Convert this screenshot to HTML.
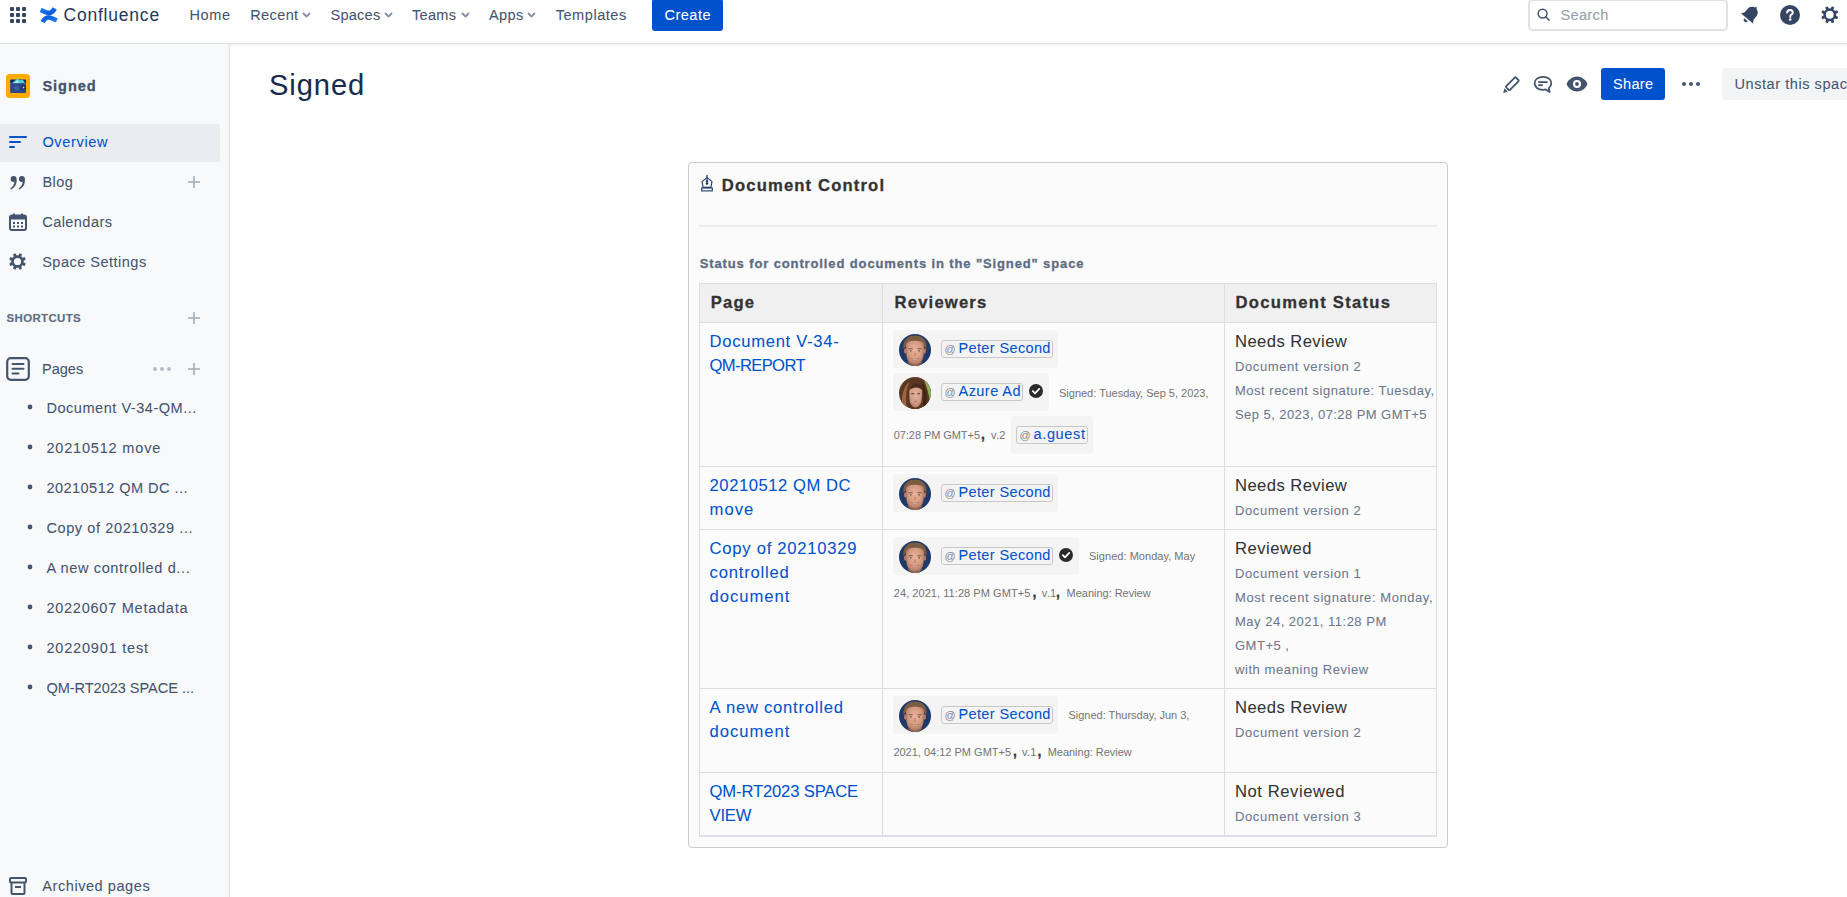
<!DOCTYPE html>
<html><head><meta charset="utf-8"><title>Signed - Confluence</title>
<style>
html,body{margin:0;padding:0;}
body{width:1847px;height:897px;overflow:hidden;position:relative;background:#fff;font-family:"Liberation Sans",sans-serif;}
.a{position:absolute;}
.t{position:absolute;white-space:nowrap;}
</style></head><body>
<div class="a" style="left:0px;top:0px;width:1847px;height:43px;background:#fff;"></div>
<div class="a" style="left:0px;top:43px;width:1847px;height:1px;background:#DCDFE4;"></div>
<div class="a" style="left:0px;top:44px;width:1847px;height:3px;background:linear-gradient(rgba(9,30,66,0.06),rgba(9,30,66,0));"></div>
<svg class="a" style="left:10px;top:7px;" width="16" height="16" viewBox="0 0 16 16" preserveAspectRatio="none"><rect x="0" y="0" width="4" height="4" rx="1" fill="#344563"/><rect x="0" y="6" width="4" height="4" rx="1" fill="#344563"/><rect x="0" y="12" width="4" height="4" rx="1" fill="#344563"/><rect x="6" y="0" width="4" height="4" rx="1" fill="#344563"/><rect x="6" y="6" width="4" height="4" rx="1" fill="#344563"/><rect x="6" y="12" width="4" height="4" rx="1" fill="#344563"/><rect x="12" y="0" width="4" height="4" rx="1" fill="#344563"/><rect x="12" y="6" width="4" height="4" rx="1" fill="#344563"/><rect x="12" y="12" width="4" height="4" rx="1" fill="#344563"/></svg>
<svg class="a" style="left:40.3px;top:6.9px;" width="17.4" height="16.4" viewBox="0 0 18 18" preserveAspectRatio="none"><defs><linearGradient id="cg1" x1="0" y1="0" x2="1" y2="1"><stop offset="0" stop-color="#0052CC"/><stop offset="1" stop-color="#2684FF"/></linearGradient><linearGradient id="cg2" x1="1" y1="1" x2="0" y2="0"><stop offset="0" stop-color="#0052CC"/><stop offset="1" stop-color="#2684FF"/></linearGradient></defs><path d="M1.6 13.6c-.25.4-.5.85-.7 1.15a.56.56 0 0 0 .19.77l3.3 2.03a.56.56 0 0 0 .78-.19c.17-.3.4-.68.66-1.1 1.78-2.92 3.56-2.56 6.79-1.02l3.27 1.56a.56.56 0 0 0 .75-.28l1.57-3.55a.56.56 0 0 0-.28-.73c-.7-.32-2.07-.97-3.3-1.56C10.17 8.43 5.25 7.6 1.6 13.6z" fill="url(#cg1)"/><path d="M16.4 4.4c.25-.4.5-.85.7-1.15a.56.56 0 0 0-.19-.77L13.6.45a.56.56 0 0 0-.78.19c-.17.3-.4.68-.66 1.1-1.78 2.92-3.56 2.56-6.79 1.02L2.1 1.2a.56.56 0 0 0-.75.28L-.22 5.03a.56.56 0 0 0 .28.73c.7.32 2.07.97 3.3 1.56 4.47 2.25 9.39 3.08 13.04-2.92z" fill="url(#cg2)"/></svg>
<div class="t " style="left:63.50px;top:5.00px;font-size:17.50px;line-height:20px;letter-spacing:0.0450em;color:#253858;">Confluence</div>
<div class="t " style="left:189.40px;top:5.00px;font-size:14.56px;line-height:20px;letter-spacing:0.0430em;color:#44546F;-webkit-text-stroke:0.06px #44546F;">Home</div>
<div class="t " style="left:250.20px;top:5.00px;font-size:14.56px;line-height:20px;letter-spacing:0.0259em;color:#44546F;-webkit-text-stroke:0.06px #44546F;">Recent</div>
<svg class="a" style="left:301.5px;top:11px;" width="9" height="8" viewBox="0 0 9 8" preserveAspectRatio="none"><path d="M1.5 2.5 L4.5 5.5 L7.5 2.5" stroke="#8590A2" stroke-width="1.8" fill="none" stroke-linecap="round" stroke-linejoin="round"/></svg>
<div class="t " style="left:330.50px;top:5.00px;font-size:14.56px;line-height:20px;letter-spacing:0.0161em;color:#44546F;-webkit-text-stroke:0.06px #44546F;">Spaces</div>
<svg class="a" style="left:383.5px;top:11px;" width="9" height="8" viewBox="0 0 9 8" preserveAspectRatio="none"><path d="M1.5 2.5 L4.5 5.5 L7.5 2.5" stroke="#8590A2" stroke-width="1.8" fill="none" stroke-linecap="round" stroke-linejoin="round"/></svg>
<div class="t " style="left:412.00px;top:5.00px;font-size:14.56px;line-height:20px;letter-spacing:0.0194em;color:#44546F;-webkit-text-stroke:0.06px #44546F;">Teams</div>
<svg class="a" style="left:460.5px;top:11px;" width="9" height="8" viewBox="0 0 9 8" preserveAspectRatio="none"><path d="M1.5 2.5 L4.5 5.5 L7.5 2.5" stroke="#8590A2" stroke-width="1.8" fill="none" stroke-linecap="round" stroke-linejoin="round"/></svg>
<div class="t " style="left:489.00px;top:5.00px;font-size:14.56px;line-height:20px;letter-spacing:0.0253em;color:#44546F;-webkit-text-stroke:0.06px #44546F;">Apps</div>
<svg class="a" style="left:526.5px;top:11px;" width="9" height="8" viewBox="0 0 9 8" preserveAspectRatio="none"><path d="M1.5 2.5 L4.5 5.5 L7.5 2.5" stroke="#8590A2" stroke-width="1.8" fill="none" stroke-linecap="round" stroke-linejoin="round"/></svg>
<div class="t " style="left:555.70px;top:5.00px;font-size:14.56px;line-height:20px;letter-spacing:0.0368em;color:#44546F;-webkit-text-stroke:0.06px #44546F;">Templates</div>
<div class="a" style="left:652px;top:-1px;width:71px;height:32px;background:#0052CC;border-radius:3px;"></div>
<div class="t " style="left:664.50px;top:5.00px;font-size:14.56px;line-height:20px;letter-spacing:0.0321em;color:#fff;-webkit-text-stroke:0.06px #fff;">Create</div>
<div class="a" style="left:1528px;top:-1px;width:200px;height:32px;box-sizing:border-box;border:2px solid #DFE1E6;border-radius:5px;background:#fff;"></div>
<svg class="a" style="left:1537px;top:8px;" width="14" height="14" viewBox="0 0 14 14" preserveAspectRatio="none"><circle cx="5.6" cy="5.6" r="4.4" stroke="#44546F" stroke-width="1.5" fill="none"/><path d="M8.8 8.8 L12.2 12.2" stroke="#44546F" stroke-width="1.5" stroke-linecap="round"/></svg>
<div class="t " style="left:1560.50px;top:5.00px;font-size:14.56px;line-height:20px;letter-spacing:0.0225em;color:#97A0AF;-webkit-text-stroke:0.10px #97A0AF;">Search</div>
<svg class="a" style="left:1739px;top:4px;" width="22" height="22" viewBox="0 0 22 22" preserveAspectRatio="none"><g transform="rotate(40 11 11)"><path d="M11 2.2c-3.6 0-5.8 2.7-5.8 6v4.2L3.2 15.6h15.6l-2-3.2V8.2c0-3.3-2.2-6-5.8-6z" fill="#344563"/><path d="M8.6 17.2h4.8a2.4 2.4 0 0 1-4.8 0z" fill="#344563"/><rect x="10" y="0.8" width="2" height="2.4" rx="1" fill="#344563"/></g></svg>
<svg class="a" style="left:1780px;top:5px;" width="20" height="20" viewBox="0 0 20 20" preserveAspectRatio="none"><circle cx="10" cy="10" r="10" fill="#344563"/><path d="M7.2 7.6c0-1.6 1.2-2.7 2.8-2.7s2.8 1.1 2.8 2.5c0 1.2-.7 1.8-1.5 2.3-.7.4-1 .8-1 1.6v.6" stroke="#fff" stroke-width="2" fill="none" stroke-linecap="round"/><circle cx="10.2" cy="14.6" r="1.25" fill="#fff"/></svg>
<svg class="a" style="left:1820px;top:5px;" width="19.5" height="19.5" viewBox="0 0 20 20" preserveAspectRatio="none"><circle cx="10" cy="10" r="5.3" stroke="#344563" stroke-width="2.6" fill="none"/><rect x="8.5" y="1.2000000000000004" width="3.0" height="3.0" rx="0.8" fill="#344563" transform="rotate(22.5 10 10)"/><rect x="8.5" y="1.2000000000000004" width="3.0" height="3.0" rx="0.8" fill="#344563" transform="rotate(67.5 10 10)"/><rect x="8.5" y="1.2000000000000004" width="3.0" height="3.0" rx="0.8" fill="#344563" transform="rotate(112.5 10 10)"/><rect x="8.5" y="1.2000000000000004" width="3.0" height="3.0" rx="0.8" fill="#344563" transform="rotate(157.5 10 10)"/><rect x="8.5" y="1.2000000000000004" width="3.0" height="3.0" rx="0.8" fill="#344563" transform="rotate(202.5 10 10)"/><rect x="8.5" y="1.2000000000000004" width="3.0" height="3.0" rx="0.8" fill="#344563" transform="rotate(247.5 10 10)"/><rect x="8.5" y="1.2000000000000004" width="3.0" height="3.0" rx="0.8" fill="#344563" transform="rotate(292.5 10 10)"/><rect x="8.5" y="1.2000000000000004" width="3.0" height="3.0" rx="0.8" fill="#344563" transform="rotate(337.5 10 10)"/></svg>
<div class="a" style="left:0px;top:44px;width:229px;height:853px;background:#F8F9FA;"></div>
<div class="a" style="left:229px;top:44px;width:1px;height:853px;background:#E4E6EA;"></div>
<div class="a" style="left:227px;top:44px;width:2px;height:853px;background:linear-gradient(90deg,rgba(9,30,66,0),rgba(9,30,66,0.03));"></div>
<svg class="a" style="left:6px;top:74px;" width="24" height="24" viewBox="0 0 24 24" preserveAspectRatio="none"><rect width="24" height="24" rx="3.5" fill="#FFAB00"/><rect x="4.2" y="5.5" width="15.8" height="4" rx="1" fill="#0B2A5E"/><path d="M5.5 9.6 L11.5 4.5 L14 6.2 L16.5 5.6 L19.5 9.6 Z" fill="#4FD1D9"/><path d="M7 9.6 L11.5 6 L13.5 9.6Z" fill="#A6EEF0"/><rect x="4.2" y="9.3" width="15.8" height="9.7" rx="0.8" fill="#284A8C"/><circle cx="10.5" cy="14" r="2.6" fill="#3A6298"/><circle cx="17.5" cy="13.5" r="2.3" fill="#0B2A5E"/><circle cx="17.5" cy="13.5" r="1" fill="#FFD23F"/></svg>
<div class="t " style="left:42.40px;top:76.00px;font-size:14.56px;line-height:20px;letter-spacing:0.0669em;color:#44546F;font-weight:bold;-webkit-text-stroke:0.30px #44546F;">Signed</div>
<div class="a" style="left:0px;top:124px;width:220px;height:38px;background:#EBECF0;border-radius:0 3px 3px 0;"></div>
<svg class="a" style="left:9px;top:136px;" width="18" height="12" viewBox="0 0 18 12" preserveAspectRatio="none"><rect x="0" y="0" width="18" height="2" rx="1" fill="#0052CC"/><rect x="0" y="5" width="12" height="2" rx="1" fill="#0052CC"/><rect x="0" y="10" width="6" height="2" rx="1" fill="#0052CC"/></svg>
<div class="t " style="left:42.40px;top:132.00px;font-size:14.56px;line-height:20px;letter-spacing:0.0448em;color:#0052CC;-webkit-text-stroke:0.06px #0052CC;">Overview</div>
<svg class="a" style="left:10px;top:175px;" width="17" height="15" viewBox="0 0 17 15" preserveAspectRatio="none"><circle cx="3.5999999999999996" cy="4.1" r="3.0" fill="#44546F"/><path d="M6.6 4.2 C6.8999999999999995 9.5 4.5 13.2 0.7 14.4 L0.5 13.2 C2.9 12 4.2 9.6 4.3999999999999995 6.8 Z" fill="#44546F"/><circle cx="11.899999999999999" cy="4.1" r="3.0" fill="#44546F"/><path d="M14.899999999999999 4.2 C15.2 9.5 12.8 13.2 9.0 14.4 L8.799999999999999 13.2 C11.2 12 12.5 9.6 12.7 6.8 Z" fill="#44546F"/></svg>
<div class="t " style="left:42.40px;top:172.00px;font-size:14.56px;line-height:20px;letter-spacing:0.0311em;color:#44546F;-webkit-text-stroke:0.06px #44546F;">Blog</div>
<svg class="a" style="left:188px;top:176px;" width="12" height="12" viewBox="0 0 12 12" preserveAspectRatio="none"><rect x="5.2" y="0" width="1.6" height="12" fill="#A5ADBA"/><rect x="0" y="5.2" width="12" height="1.6" fill="#A5ADBA"/></svg>
<svg class="a" style="left:9px;top:213px;" width="18" height="18" viewBox="0 0 18 18" preserveAspectRatio="none"><rect x="1" y="2.5" width="16" height="14.5" rx="2" stroke="#44546F" stroke-width="2" fill="none"/><rect x="1" y="2.5" width="16" height="4" fill="#44546F"/><rect x="4" y="0.5" width="2" height="3" fill="#44546F"/><rect x="12" y="0.5" width="2" height="3" fill="#44546F"/><rect x="4" y="9.0" width="2" height="2" fill="#44546F"/><rect x="4" y="12.5" width="2" height="2" fill="#44546F"/><rect x="8" y="9.0" width="2" height="2" fill="#44546F"/><rect x="8" y="12.5" width="2" height="2" fill="#44546F"/><rect x="12" y="9.0" width="2" height="2" fill="#44546F"/><rect x="12" y="12.5" width="2" height="2" fill="#44546F"/></svg>
<div class="t " style="left:42.20px;top:212.00px;font-size:14.56px;line-height:20px;letter-spacing:0.0297em;color:#44546F;-webkit-text-stroke:0.06px #44546F;">Calendars</div>
<svg class="a" style="left:8px;top:252px;" width="19" height="19" viewBox="0 0 20 20" preserveAspectRatio="none"><circle cx="10" cy="10" r="5.199999999999999" stroke="#44546F" stroke-width="2.8" fill="none"/><rect x="8.4" y="1.2000000000000004" width="3.2" height="3.0" rx="0.8" fill="#44546F" transform="rotate(22.5 10 10)"/><rect x="8.4" y="1.2000000000000004" width="3.2" height="3.0" rx="0.8" fill="#44546F" transform="rotate(67.5 10 10)"/><rect x="8.4" y="1.2000000000000004" width="3.2" height="3.0" rx="0.8" fill="#44546F" transform="rotate(112.5 10 10)"/><rect x="8.4" y="1.2000000000000004" width="3.2" height="3.0" rx="0.8" fill="#44546F" transform="rotate(157.5 10 10)"/><rect x="8.4" y="1.2000000000000004" width="3.2" height="3.0" rx="0.8" fill="#44546F" transform="rotate(202.5 10 10)"/><rect x="8.4" y="1.2000000000000004" width="3.2" height="3.0" rx="0.8" fill="#44546F" transform="rotate(247.5 10 10)"/><rect x="8.4" y="1.2000000000000004" width="3.2" height="3.0" rx="0.8" fill="#44546F" transform="rotate(292.5 10 10)"/><rect x="8.4" y="1.2000000000000004" width="3.2" height="3.0" rx="0.8" fill="#44546F" transform="rotate(337.5 10 10)"/></svg>
<div class="t " style="left:42.20px;top:252.00px;font-size:14.56px;line-height:20px;letter-spacing:0.0324em;color:#44546F;-webkit-text-stroke:0.06px #44546F;">Space Settings</div>
<div class="t " style="left:6.60px;top:308.00px;font-size:11.44px;line-height:20px;letter-spacing:0.0310em;color:#5E6C84;font-weight:bold;-webkit-text-stroke:0.15px #5E6C84;">SHORTCUTS</div>
<svg class="a" style="left:188px;top:312px;" width="12" height="12" viewBox="0 0 12 12" preserveAspectRatio="none"><rect x="5.2" y="0" width="1.6" height="12" fill="#A5ADBA"/><rect x="0" y="5.2" width="12" height="1.6" fill="#A5ADBA"/></svg>
<svg class="a" style="left:6px;top:357px;" width="24" height="24" viewBox="0 0 24 24" preserveAspectRatio="none"><rect x="1.2" y="1.2" width="21.6" height="21.6" rx="3.5" stroke="#44546F" stroke-width="2.2" fill="none"/><rect x="5.5" y="6" width="13" height="2" rx="1" fill="#44546F"/><rect x="5.5" y="10.8" width="13" height="2" rx="1" fill="#44546F"/><rect x="5.5" y="15.6" width="8" height="2" rx="1" fill="#44546F"/></svg>
<div class="t " style="left:42.00px;top:359.00px;font-size:14.56px;line-height:20px;letter-spacing:-0.0013em;color:#44546F;-webkit-text-stroke:0.06px #44546F;">Pages</div>
<svg class="a" style="left:152px;top:366px;" width="20" height="6" viewBox="0 0 20 6" preserveAspectRatio="none"><circle cx="3" cy="3" r="1.9" fill="#B3B9C4"/><circle cx="10" cy="3" r="1.9" fill="#B3B9C4"/><circle cx="17" cy="3" r="1.9" fill="#B3B9C4"/></svg>
<svg class="a" style="left:188px;top:363px;" width="12" height="12" viewBox="0 0 12 12" preserveAspectRatio="none"><rect x="5.2" y="0" width="1.6" height="12" fill="#A5ADBA"/><rect x="0" y="5.2" width="12" height="1.6" fill="#A5ADBA"/></svg>
<svg class="a" style="left:27px;top:403.5px;" width="6" height="6" viewBox="0 0 6 6" preserveAspectRatio="none"><circle cx="3" cy="3" r="2.4" fill="#44546F"/></svg>
<div class="t " style="left:46.40px;top:398.00px;font-size:14.56px;line-height:20px;letter-spacing:0.0356em;color:#44546F;-webkit-text-stroke:0.06px #44546F;">Document V-34-QM...</div>
<svg class="a" style="left:27px;top:443.5px;" width="6" height="6" viewBox="0 0 6 6" preserveAspectRatio="none"><circle cx="3" cy="3" r="2.4" fill="#44546F"/></svg>
<div class="t " style="left:46.40px;top:438.00px;font-size:14.56px;line-height:20px;letter-spacing:0.0548em;color:#44546F;-webkit-text-stroke:0.06px #44546F;">20210512 move</div>
<svg class="a" style="left:27px;top:483.5px;" width="6" height="6" viewBox="0 0 6 6" preserveAspectRatio="none"><circle cx="3" cy="3" r="2.4" fill="#44546F"/></svg>
<div class="t " style="left:46.40px;top:478.00px;font-size:14.56px;line-height:20px;letter-spacing:0.0309em;color:#44546F;-webkit-text-stroke:0.06px #44546F;">20210512 QM DC ...</div>
<svg class="a" style="left:27px;top:523.5px;" width="6" height="6" viewBox="0 0 6 6" preserveAspectRatio="none"><circle cx="3" cy="3" r="2.4" fill="#44546F"/></svg>
<div class="t " style="left:46.40px;top:518.00px;font-size:14.56px;line-height:20px;letter-spacing:0.0405em;color:#44546F;-webkit-text-stroke:0.06px #44546F;">Copy of 20210329 ...</div>
<svg class="a" style="left:27px;top:563.5px;" width="6" height="6" viewBox="0 0 6 6" preserveAspectRatio="none"><circle cx="3" cy="3" r="2.4" fill="#44546F"/></svg>
<div class="t " style="left:46.40px;top:558.00px;font-size:14.56px;line-height:20px;letter-spacing:0.0423em;color:#44546F;-webkit-text-stroke:0.06px #44546F;">A new controlled d...</div>
<svg class="a" style="left:27px;top:603.5px;" width="6" height="6" viewBox="0 0 6 6" preserveAspectRatio="none"><circle cx="3" cy="3" r="2.4" fill="#44546F"/></svg>
<div class="t " style="left:46.40px;top:598.00px;font-size:14.56px;line-height:20px;letter-spacing:0.0504em;color:#44546F;-webkit-text-stroke:0.06px #44546F;">20220607 Metadata</div>
<svg class="a" style="left:27px;top:643.5px;" width="6" height="6" viewBox="0 0 6 6" preserveAspectRatio="none"><circle cx="3" cy="3" r="2.4" fill="#44546F"/></svg>
<div class="t " style="left:46.40px;top:638.00px;font-size:14.56px;line-height:20px;letter-spacing:0.0544em;color:#44546F;-webkit-text-stroke:0.06px #44546F;">20220901 test</div>
<svg class="a" style="left:27px;top:683.5px;" width="6" height="6" viewBox="0 0 6 6" preserveAspectRatio="none"><circle cx="3" cy="3" r="2.4" fill="#44546F"/></svg>
<div class="t " style="left:46.40px;top:678.00px;font-size:14.56px;line-height:20px;letter-spacing:-0.0024em;color:#44546F;-webkit-text-stroke:0.06px #44546F;">QM-RT2023 SPACE ...</div>
<svg class="a" style="left:9px;top:877px;" width="18" height="18" viewBox="0 0 18 18" preserveAspectRatio="none"><rect x="1" y="1" width="16" height="4.5" rx="1" stroke="#44546F" stroke-width="2" fill="none"/><path d="M2.5 5.5 V16 a1 1 0 0 0 1 1 h11 a1 1 0 0 0 1 -1 V5.5" stroke="#44546F" stroke-width="2" fill="none"/><rect x="6" y="9" width="6" height="2" fill="#44546F"/></svg>
<div class="t " style="left:42.30px;top:876.00px;font-size:14.56px;line-height:20px;letter-spacing:0.0374em;color:#44546F;-webkit-text-stroke:0.06px #44546F;">Archived pages</div>
<div class="t " style="left:269.00px;top:75.00px;font-size:29.12px;line-height:20px;letter-spacing:0.0311em;color:#172B4D;-webkit-text-stroke:0.06px #172B4D;">Signed</div>
<svg class="a" style="left:1502px;top:75px;" width="19" height="19" viewBox="0 0 19 19" preserveAspectRatio="none"><g transform="rotate(-45 10.6 8.4)"><rect x="3.3" y="5.8" width="13.8" height="5.2" rx="0.9" stroke="#44546F" stroke-width="1.8" fill="none"/></g><path d="M1.2 17.9 L2.4 13.3 L5.8 16.7 Z" fill="#44546F"/></svg>
<svg class="a" style="left:1533px;top:75px;" width="20" height="19" viewBox="0 0 20 19" preserveAspectRatio="none"><path d="M10 1.8 C5 1.8 1.6 4.6 1.6 8.3 C1.6 12 5 14.8 10 14.8 C11 14.8 11.9 14.7 12.7 14.4 L16.6 17 L15.7 13.3 C17.3 12.1 18.3 10.3 18.3 8.3 C18.3 4.6 15 1.8 10 1.8 Z" stroke="#44546F" stroke-width="1.8" fill="none" stroke-linejoin="round"/><rect x="5.2" y="6.2" width="9.4" height="1.8" fill="#44546F"/><rect x="5.2" y="9.3" width="4.6" height="1.8" fill="#44546F"/></svg>
<svg class="a" style="left:1566px;top:75px;" width="22" height="18" viewBox="0 0 22 18" preserveAspectRatio="none"><path d="M11 1.5 C5.5 1.5 1.5 6 0.6 9 C1.5 12 5.5 16.5 11 16.5 C16.5 16.5 20.5 12 21.4 9 C20.5 6 16.5 1.5 11 1.5 Z" fill="#44546F"/><circle cx="11" cy="9" r="4" fill="#fff"/><circle cx="11" cy="9" r="1.9" fill="#44546F"/></svg>
<div class="a" style="left:1601px;top:68px;width:64px;height:32px;background:#0052CC;border-radius:3px;"></div>
<div class="t " style="left:1613.00px;top:74.00px;font-size:14.56px;line-height:20px;letter-spacing:0.0212em;color:#fff;-webkit-text-stroke:0.06px #fff;">Share</div>
<svg class="a" style="left:1681px;top:81px;" width="20" height="6" viewBox="0 0 20 6" preserveAspectRatio="none"><circle cx="3" cy="3" r="2" fill="#44546F"/><circle cx="10" cy="3" r="2" fill="#44546F"/><circle cx="17" cy="3" r="2" fill="#44546F"/></svg>
<div class="a" style="left:1722px;top:68px;width:140px;height:32px;background:#F3F4F6;border-radius:3px;"></div>
<div class="t " style="left:1734.50px;top:74.00px;font-size:14.56px;line-height:20px;letter-spacing:0.0375em;color:#44546F;-webkit-text-stroke:0.06px #44546F;">Unstar this space</div>
<div class="a" style="left:688px;top:162px;width:760px;height:686px;box-sizing:border-box;border:1px solid #CCCCCC;border-radius:4px;background:#FBFBFB;"></div>
<svg class="a" style="left:700px;top:174px;" width="14" height="18" viewBox="0 0 14 18" preserveAspectRatio="none"><path d="M7 1 V4.2" stroke="#17386E" stroke-width="1.3"/><path d="M7 3.6 L12 7.6 L10.9 13.4 H3.1 L2 7.6 Z" stroke="#17386E" stroke-width="1.1" fill="none" stroke-linejoin="round"/><path d="M7 3.8 L5.9 7.2 L7 9.6 L8.1 7.2 Z" fill="#17386E"/><circle cx="7" cy="9.4" r="1.25" fill="#17386E"/><rect x="1.7" y="14" width="10.6" height="2.9" stroke="#17386E" stroke-width="1.1" fill="none"/></svg>
<div class="t " style="left:721.80px;top:176.00px;font-size:16.64px;line-height:20px;letter-spacing:0.0690em;color:#333333;font-weight:bold;-webkit-text-stroke:0.30px #333333;">Document Control</div>
<div class="a" style="left:699px;top:225px;width:738px;height:2px;background:#EBECF0;"></div>
<div class="t " style="left:699.70px;top:254.00px;font-size:13.00px;line-height:20px;letter-spacing:0.0676em;color:#5E6C84;font-weight:bold;-webkit-text-stroke:0.30px #5E6C84;">Status for controlled documents in the "Signed" space</div>
<div class="a" style="left:699px;top:283px;width:738px;height:39px;background:#F0F0F0;"></div>
<div class="a" style="left:699px;top:283px;width:738px;height:1px;background:#DDDDDD;"></div>
<div class="a" style="left:699px;top:322px;width:738px;height:1px;background:#DDDDDD;"></div>
<div class="a" style="left:699px;top:466px;width:738px;height:1px;background:#DDDDDD;"></div>
<div class="a" style="left:699px;top:529px;width:738px;height:1px;background:#DDDDDD;"></div>
<div class="a" style="left:699px;top:688px;width:738px;height:1px;background:#DDDDDD;"></div>
<div class="a" style="left:699px;top:772px;width:738px;height:1px;background:#DDDDDD;"></div>
<div class="a" style="left:699px;top:835px;width:738px;height:2px;background:#DFE1E6;"></div>
<div class="a" style="left:699px;top:283px;width:1px;height:552px;background:#DDDDDD;"></div>
<div class="a" style="left:882px;top:283px;width:1px;height:552px;background:#DDDDDD;"></div>
<div class="a" style="left:1224px;top:283px;width:1px;height:552px;background:#DDDDDD;"></div>
<div class="a" style="left:1436px;top:283px;width:1px;height:552px;background:#DDDDDD;"></div>
<div class="t " style="left:710.80px;top:293.00px;font-size:16.64px;line-height:20px;letter-spacing:0.0699em;color:#333333;font-weight:bold;-webkit-text-stroke:0.30px #333333;">Page</div>
<div class="t " style="left:894.50px;top:293.00px;font-size:16.64px;line-height:20px;letter-spacing:0.0715em;color:#333333;font-weight:bold;-webkit-text-stroke:0.30px #333333;">Reviewers</div>
<div class="t " style="left:1235.50px;top:293.00px;font-size:16.64px;line-height:20px;letter-spacing:0.0763em;color:#333333;font-weight:bold;-webkit-text-stroke:0.30px #333333;">Document Status</div>
<div class="t " style="left:709.60px;top:332.00px;font-size:16.64px;line-height:20px;letter-spacing:0.0418em;color:#0052CC;-webkit-text-stroke:0.06px #0052CC;">Document V-34-</div>
<div class="t " style="left:709.60px;top:356.00px;font-size:16.64px;line-height:20px;letter-spacing:-0.0398em;color:#0052CC;-webkit-text-stroke:0.06px #0052CC;">QM-REPORT</div>
<div class="a" style="left:893px;top:330px;width:165px;height:38px;background:#F4F4F4;border-radius:4px;"></div>
<svg class="a" style="left:899px;top:333.5px;" width="32" height="32" viewBox="0 0 32 32" preserveAspectRatio="none"><defs><clipPath id="av1"><circle cx="16" cy="16" r="16"/></clipPath><radialGradient id="av1f" cx="0.5" cy="0.38" r="0.62"><stop offset="0" stop-color="#EDB59C"/><stop offset="0.6" stop-color="#D39A80"/><stop offset="1" stop-color="#A56E58"/></radialGradient></defs><g clip-path="url(#av1)"><rect width="32" height="32" fill="#1F3A68"/><path d="M4.5 15 C3.5 6 9 1.5 16 1.5 C23.5 1.5 28.5 6 27.5 15 L25.5 13 C24.5 9 20.5 7.5 16 7.8 C11.5 7.5 7.5 9 6.5 13 Z" fill="#7A5C42"/><path d="M7 11.5 C7 8 10.5 6.8 16 6.8 C21.5 6.8 25 8 25 11.5 L24.6 21 C23.6 28.5 20 32 16 32 C12 32 8.4 28.5 7.4 21 Z" fill="url(#av1f)"/><ellipse cx="6.6" cy="17" rx="1.7" ry="2.8" fill="#B57A62"/><ellipse cx="25.4" cy="17" rx="1.7" ry="2.8" fill="#B57A62"/><path d="M9.5 14.8 h4.2" stroke="#7A5A4A" stroke-width="1.1"/><path d="M18.3 14.8 h4.2" stroke="#7A5A4A" stroke-width="1.1"/><circle cx="11.8" cy="16.8" r="0.9" fill="#5A6A78"/><circle cx="20.2" cy="16.8" r="0.9" fill="#5A6A78"/><path d="M16 17 L14.8 21.5 H17.2 Z" fill="#C08068"/><path d="M11.8 24 C13.5 26.6 18.5 26.6 20.2 24 C18.5 25 13.5 25 11.8 24Z" fill="#F4E6DC" stroke="#9A5E4E" stroke-width="0.5"/><path d="M9 26 C11 31 21 31 23 26 L23 32 H9Z" fill="#8E6250" opacity="0.55"/></g></svg>
<div class="a" style="left:941px;top:340px;width:112px;height:18px;box-sizing:border-box;border:1px solid #C8C8C8;border-radius:3px;background:#F4F4F4;"></div>
<div class="t " style="left:944.50px;top:339.00px;font-size:11.00px;line-height:20px;letter-spacing:0.0000em;color:#8C8C8C;-webkit-text-stroke:0.06px #8C8C8C;">@</div>
<div class="t " style="left:958.50px;top:338.00px;font-size:14.56px;line-height:20px;letter-spacing:0.0238em;color:#0052CC;-webkit-text-stroke:0.06px #0052CC;">Peter Second</div>
<div class="a" style="left:893px;top:373px;width:156px;height:38px;background:#F4F4F4;border-radius:4px;"></div>
<svg class="a" style="left:899px;top:376.5px;" width="32" height="32" viewBox="0 0 32 32" preserveAspectRatio="none"><defs><clipPath id="av2"><circle cx="16" cy="16" r="16"/></clipPath><radialGradient id="av2f" cx="0.5" cy="0.42" r="0.6"><stop offset="0" stop-color="#E2B3A0"/><stop offset="0.7" stop-color="#CF9C86"/><stop offset="1" stop-color="#A87560"/></radialGradient></defs><g clip-path="url(#av2)"><rect width="32" height="32" fill="#5E3A24"/><path d="M24 0 H32 V26 C30 22 29 12 24 0Z" fill="#8DAE5E"/><path d="M2 32 C0 20 1.5 4 14 2 C26 1 31 12 29.5 32 Z" fill="#5A3621"/><path d="M3 30 C2 20 4 9 11 4.5 C7 11 6.5 22 8 31Z" fill="#9A6440"/><path d="M22 5 C27 9 28 18 27 30 L24 30 C25 20 25 11 22 5Z" fill="#3E2414"/><path d="M10.2 13 C10.5 8.8 13 7.5 16.5 7.5 C20.5 7.5 23.2 9 23.2 13.5 L22.8 22 C22.3 27.5 19.5 30.5 16.5 30.5 C13.5 30.5 10.8 27.5 10.4 22 Z" fill="url(#av2f)"/><path d="M9.8 13.5 C11 8 14 6.8 17 6.8 C21 6.8 23.8 9 23.6 14 C21.5 10 15 9.2 9.8 13.5Z" fill="#4A2C1A"/><path d="M12.3 16.6 h3" stroke="#6E5048" stroke-width="1.1"/><path d="M18.2 16.6 h3" stroke="#6E5048" stroke-width="1.1"/><path d="M14.6 24.3 C15.8 23.6 17.4 23.6 18.6 24.3 C17.4 25.2 15.8 25.2 14.6 24.3Z" fill="#B06A6E"/></g></svg>
<div class="a" style="left:941px;top:383px;width:82px;height:18px;box-sizing:border-box;border:1px solid #C8C8C8;border-radius:3px;background:#F4F4F4;"></div>
<div class="t " style="left:944.50px;top:382.00px;font-size:11.00px;line-height:20px;letter-spacing:0.0000em;color:#8C8C8C;-webkit-text-stroke:0.06px #8C8C8C;">@</div>
<div class="t " style="left:958.50px;top:381.00px;font-size:14.56px;line-height:20px;letter-spacing:0.0295em;color:#0052CC;-webkit-text-stroke:0.06px #0052CC;">Azure Ad</div>
<svg class="a" style="left:1029px;top:384px;" width="14" height="14" viewBox="0 0 14 14" preserveAspectRatio="none"><circle cx="7" cy="7" r="7" fill="#2B2B2B"/><path d="M3.8 7.2 L6 9.3 L10.2 4.9" stroke="#fff" stroke-width="1.8" fill="none" stroke-linecap="round" stroke-linejoin="round"/></svg>
<div class="t " style="left:1059.00px;top:383.00px;font-size:11.00px;line-height:20px;letter-spacing:-0.0003em;color:#737373;">Signed: Tuesday, Sep 5, 2023,</div>
<div class="t " style="left:893.75px;top:425.00px;font-size:11.00px;line-height:20px;letter-spacing:-0.0061em;color:#737373;">07:28 PM GMT+5</div>
<div class="t " style="left:981.00px;top:424.00px;font-size:14.00px;line-height:20px;letter-spacing:0.0000em;color:#333333;font-weight:bold;-webkit-text-stroke:0.30px #333333;">,</div>
<div class="t " style="left:991.00px;top:425.00px;font-size:11.00px;line-height:20px;letter-spacing:0.0176em;color:#737373;">v.2</div>
<div class="a" style="left:1011px;top:416px;width:82px;height:38px;background:#F4F4F4;border-radius:4px;"></div>
<div class="a" style="left:1016px;top:426px;width:72px;height:18px;box-sizing:border-box;border:1px solid #C8C8C8;border-radius:3px;background:#F4F4F4;"></div>
<div class="t " style="left:1019.50px;top:425.00px;font-size:11.00px;line-height:20px;letter-spacing:0.0000em;color:#8C8C8C;-webkit-text-stroke:0.06px #8C8C8C;">@</div>
<div class="t " style="left:1033.50px;top:424.00px;font-size:14.56px;line-height:20px;letter-spacing:0.0435em;color:#0052CC;-webkit-text-stroke:0.06px #0052CC;">a.guest</div>
<div class="t " style="left:1235.00px;top:332.00px;font-size:16.64px;line-height:20px;letter-spacing:0.0254em;color:#333333;-webkit-text-stroke:0.06px #333333;">Needs Review</div>
<div class="t " style="left:1235.00px;top:357.00px;font-size:13.00px;line-height:20px;letter-spacing:0.0462em;color:#6B778C;-webkit-text-stroke:0.06px #6B778C;">Document version 2</div>
<div class="t " style="left:1235.00px;top:381.00px;font-size:13.00px;line-height:20px;letter-spacing:0.0387em;color:#6B778C;-webkit-text-stroke:0.06px #6B778C;">Most recent signature: Tuesday,</div>
<div class="t " style="left:1235.00px;top:405.00px;font-size:13.00px;line-height:20px;letter-spacing:0.0333em;color:#6B778C;-webkit-text-stroke:0.06px #6B778C;">Sep 5, 2023, 07:28 PM GMT+5</div>
<div class="t " style="left:709.60px;top:476.00px;font-size:16.64px;line-height:20px;letter-spacing:0.0321em;color:#0052CC;-webkit-text-stroke:0.06px #0052CC;">20210512 QM DC</div>
<div class="t " style="left:709.60px;top:500.00px;font-size:16.64px;line-height:20px;letter-spacing:0.0603em;color:#0052CC;-webkit-text-stroke:0.06px #0052CC;">move</div>
<div class="a" style="left:893px;top:474px;width:165px;height:38px;background:#F4F4F4;border-radius:4px;"></div>
<svg class="a" style="left:899px;top:477.5px;" width="32" height="32" viewBox="0 0 32 32" preserveAspectRatio="none"><defs><clipPath id="av3"><circle cx="16" cy="16" r="16"/></clipPath><radialGradient id="av3f" cx="0.5" cy="0.38" r="0.62"><stop offset="0" stop-color="#EDB59C"/><stop offset="0.6" stop-color="#D39A80"/><stop offset="1" stop-color="#A56E58"/></radialGradient></defs><g clip-path="url(#av3)"><rect width="32" height="32" fill="#1F3A68"/><path d="M4.5 15 C3.5 6 9 1.5 16 1.5 C23.5 1.5 28.5 6 27.5 15 L25.5 13 C24.5 9 20.5 7.5 16 7.8 C11.5 7.5 7.5 9 6.5 13 Z" fill="#7A5C42"/><path d="M7 11.5 C7 8 10.5 6.8 16 6.8 C21.5 6.8 25 8 25 11.5 L24.6 21 C23.6 28.5 20 32 16 32 C12 32 8.4 28.5 7.4 21 Z" fill="url(#av3f)"/><ellipse cx="6.6" cy="17" rx="1.7" ry="2.8" fill="#B57A62"/><ellipse cx="25.4" cy="17" rx="1.7" ry="2.8" fill="#B57A62"/><path d="M9.5 14.8 h4.2" stroke="#7A5A4A" stroke-width="1.1"/><path d="M18.3 14.8 h4.2" stroke="#7A5A4A" stroke-width="1.1"/><circle cx="11.8" cy="16.8" r="0.9" fill="#5A6A78"/><circle cx="20.2" cy="16.8" r="0.9" fill="#5A6A78"/><path d="M16 17 L14.8 21.5 H17.2 Z" fill="#C08068"/><path d="M11.8 24 C13.5 26.6 18.5 26.6 20.2 24 C18.5 25 13.5 25 11.8 24Z" fill="#F4E6DC" stroke="#9A5E4E" stroke-width="0.5"/><path d="M9 26 C11 31 21 31 23 26 L23 32 H9Z" fill="#8E6250" opacity="0.55"/></g></svg>
<div class="a" style="left:941px;top:484px;width:112px;height:18px;box-sizing:border-box;border:1px solid #C8C8C8;border-radius:3px;background:#F4F4F4;"></div>
<div class="t " style="left:944.50px;top:483.00px;font-size:11.00px;line-height:20px;letter-spacing:0.0000em;color:#8C8C8C;-webkit-text-stroke:0.06px #8C8C8C;">@</div>
<div class="t " style="left:958.50px;top:482.00px;font-size:14.56px;line-height:20px;letter-spacing:0.0238em;color:#0052CC;-webkit-text-stroke:0.06px #0052CC;">Peter Second</div>
<div class="t " style="left:1235.00px;top:476.00px;font-size:16.64px;line-height:20px;letter-spacing:0.0254em;color:#333333;-webkit-text-stroke:0.06px #333333;">Needs Review</div>
<div class="t " style="left:1235.00px;top:501.00px;font-size:13.00px;line-height:20px;letter-spacing:0.0462em;color:#6B778C;-webkit-text-stroke:0.06px #6B778C;">Document version 2</div>
<div class="t " style="left:709.60px;top:539.00px;font-size:16.64px;line-height:20px;letter-spacing:0.0440em;color:#0052CC;-webkit-text-stroke:0.06px #0052CC;">Copy of 20210329</div>
<div class="t " style="left:709.60px;top:563.00px;font-size:16.64px;line-height:20px;letter-spacing:0.0469em;color:#0052CC;-webkit-text-stroke:0.06px #0052CC;">controlled</div>
<div class="t " style="left:709.60px;top:587.00px;font-size:16.64px;line-height:20px;letter-spacing:0.0577em;color:#0052CC;-webkit-text-stroke:0.06px #0052CC;">document</div>
<div class="a" style="left:893px;top:537px;width:186px;height:38px;background:#F4F4F4;border-radius:4px;"></div>
<svg class="a" style="left:899px;top:540.5px;" width="32" height="32" viewBox="0 0 32 32" preserveAspectRatio="none"><defs><clipPath id="av4"><circle cx="16" cy="16" r="16"/></clipPath><radialGradient id="av4f" cx="0.5" cy="0.38" r="0.62"><stop offset="0" stop-color="#EDB59C"/><stop offset="0.6" stop-color="#D39A80"/><stop offset="1" stop-color="#A56E58"/></radialGradient></defs><g clip-path="url(#av4)"><rect width="32" height="32" fill="#1F3A68"/><path d="M4.5 15 C3.5 6 9 1.5 16 1.5 C23.5 1.5 28.5 6 27.5 15 L25.5 13 C24.5 9 20.5 7.5 16 7.8 C11.5 7.5 7.5 9 6.5 13 Z" fill="#7A5C42"/><path d="M7 11.5 C7 8 10.5 6.8 16 6.8 C21.5 6.8 25 8 25 11.5 L24.6 21 C23.6 28.5 20 32 16 32 C12 32 8.4 28.5 7.4 21 Z" fill="url(#av4f)"/><ellipse cx="6.6" cy="17" rx="1.7" ry="2.8" fill="#B57A62"/><ellipse cx="25.4" cy="17" rx="1.7" ry="2.8" fill="#B57A62"/><path d="M9.5 14.8 h4.2" stroke="#7A5A4A" stroke-width="1.1"/><path d="M18.3 14.8 h4.2" stroke="#7A5A4A" stroke-width="1.1"/><circle cx="11.8" cy="16.8" r="0.9" fill="#5A6A78"/><circle cx="20.2" cy="16.8" r="0.9" fill="#5A6A78"/><path d="M16 17 L14.8 21.5 H17.2 Z" fill="#C08068"/><path d="M11.8 24 C13.5 26.6 18.5 26.6 20.2 24 C18.5 25 13.5 25 11.8 24Z" fill="#F4E6DC" stroke="#9A5E4E" stroke-width="0.5"/><path d="M9 26 C11 31 21 31 23 26 L23 32 H9Z" fill="#8E6250" opacity="0.55"/></g></svg>
<div class="a" style="left:941px;top:547px;width:112px;height:18px;box-sizing:border-box;border:1px solid #C8C8C8;border-radius:3px;background:#F4F4F4;"></div>
<div class="t " style="left:944.50px;top:546.00px;font-size:11.00px;line-height:20px;letter-spacing:0.0000em;color:#8C8C8C;-webkit-text-stroke:0.06px #8C8C8C;">@</div>
<div class="t " style="left:958.50px;top:545.00px;font-size:14.56px;line-height:20px;letter-spacing:0.0238em;color:#0052CC;-webkit-text-stroke:0.06px #0052CC;">Peter Second</div>
<svg class="a" style="left:1059px;top:548px;" width="14" height="14" viewBox="0 0 14 14" preserveAspectRatio="none"><circle cx="7" cy="7" r="7" fill="#2B2B2B"/><path d="M3.8 7.2 L6 9.3 L10.2 4.9" stroke="#fff" stroke-width="1.8" fill="none" stroke-linecap="round" stroke-linejoin="round"/></svg>
<div class="t " style="left:1089.00px;top:546.00px;font-size:11.00px;line-height:20px;letter-spacing:0.0033em;color:#737373;">Signed: Monday, May</div>
<div class="t " style="left:893.80px;top:583.00px;font-size:11.00px;line-height:20px;letter-spacing:0.0049em;color:#737373;">24, 2021, 11:28 PM GMT+5</div>
<div class="t " style="left:1032.50px;top:582.00px;font-size:14.00px;line-height:20px;letter-spacing:0.0000em;color:#333333;font-weight:bold;-webkit-text-stroke:0.30px #333333;">,</div>
<div class="t " style="left:1041.80px;top:583.00px;font-size:11.00px;line-height:20px;letter-spacing:0.0176em;color:#737373;">v.1</div>
<div class="t " style="left:1056.00px;top:582.00px;font-size:14.00px;line-height:20px;letter-spacing:0.0000em;color:#333333;font-weight:bold;-webkit-text-stroke:0.30px #333333;">,</div>
<div class="t " style="left:1066.60px;top:583.00px;font-size:11.00px;line-height:20px;letter-spacing:-0.0021em;color:#737373;">Meaning: Review</div>
<div class="t " style="left:1235.00px;top:539.00px;font-size:16.64px;line-height:20px;letter-spacing:0.0304em;color:#333333;-webkit-text-stroke:0.06px #333333;">Reviewed</div>
<div class="t " style="left:1235.00px;top:564.00px;font-size:13.00px;line-height:20px;letter-spacing:0.0462em;color:#6B778C;-webkit-text-stroke:0.06px #6B778C;">Document version 1</div>
<div class="t " style="left:1235.00px;top:588.00px;font-size:13.00px;line-height:20px;letter-spacing:0.0435em;color:#6B778C;-webkit-text-stroke:0.06px #6B778C;">Most recent signature: Monday,</div>
<div class="t " style="left:1235.00px;top:612.00px;font-size:13.00px;line-height:20px;letter-spacing:0.0386em;color:#6B778C;-webkit-text-stroke:0.06px #6B778C;">May 24, 2021, 11:28 PM</div>
<div class="t " style="left:1235.00px;top:636.00px;font-size:13.00px;line-height:20px;letter-spacing:0.0389em;color:#6B778C;-webkit-text-stroke:0.06px #6B778C;">GMT+5 ,</div>
<div class="t " style="left:1235.00px;top:660.00px;font-size:13.00px;line-height:20px;letter-spacing:0.0444em;color:#6B778C;-webkit-text-stroke:0.06px #6B778C;">with meaning Review</div>
<div class="t " style="left:709.60px;top:698.00px;font-size:16.64px;line-height:20px;letter-spacing:0.0454em;color:#0052CC;-webkit-text-stroke:0.06px #0052CC;">A new controlled</div>
<div class="t " style="left:709.60px;top:722.00px;font-size:16.64px;line-height:20px;letter-spacing:0.0577em;color:#0052CC;-webkit-text-stroke:0.06px #0052CC;">document</div>
<div class="a" style="left:893px;top:696px;width:165px;height:38px;background:#F4F4F4;border-radius:4px;"></div>
<svg class="a" style="left:899px;top:699.5px;" width="32" height="32" viewBox="0 0 32 32" preserveAspectRatio="none"><defs><clipPath id="av5"><circle cx="16" cy="16" r="16"/></clipPath><radialGradient id="av5f" cx="0.5" cy="0.38" r="0.62"><stop offset="0" stop-color="#EDB59C"/><stop offset="0.6" stop-color="#D39A80"/><stop offset="1" stop-color="#A56E58"/></radialGradient></defs><g clip-path="url(#av5)"><rect width="32" height="32" fill="#1F3A68"/><path d="M4.5 15 C3.5 6 9 1.5 16 1.5 C23.5 1.5 28.5 6 27.5 15 L25.5 13 C24.5 9 20.5 7.5 16 7.8 C11.5 7.5 7.5 9 6.5 13 Z" fill="#7A5C42"/><path d="M7 11.5 C7 8 10.5 6.8 16 6.8 C21.5 6.8 25 8 25 11.5 L24.6 21 C23.6 28.5 20 32 16 32 C12 32 8.4 28.5 7.4 21 Z" fill="url(#av5f)"/><ellipse cx="6.6" cy="17" rx="1.7" ry="2.8" fill="#B57A62"/><ellipse cx="25.4" cy="17" rx="1.7" ry="2.8" fill="#B57A62"/><path d="M9.5 14.8 h4.2" stroke="#7A5A4A" stroke-width="1.1"/><path d="M18.3 14.8 h4.2" stroke="#7A5A4A" stroke-width="1.1"/><circle cx="11.8" cy="16.8" r="0.9" fill="#5A6A78"/><circle cx="20.2" cy="16.8" r="0.9" fill="#5A6A78"/><path d="M16 17 L14.8 21.5 H17.2 Z" fill="#C08068"/><path d="M11.8 24 C13.5 26.6 18.5 26.6 20.2 24 C18.5 25 13.5 25 11.8 24Z" fill="#F4E6DC" stroke="#9A5E4E" stroke-width="0.5"/><path d="M9 26 C11 31 21 31 23 26 L23 32 H9Z" fill="#8E6250" opacity="0.55"/></g></svg>
<div class="a" style="left:941px;top:706px;width:112px;height:18px;box-sizing:border-box;border:1px solid #C8C8C8;border-radius:3px;background:#F4F4F4;"></div>
<div class="t " style="left:944.50px;top:705.00px;font-size:11.00px;line-height:20px;letter-spacing:0.0000em;color:#8C8C8C;-webkit-text-stroke:0.06px #8C8C8C;">@</div>
<div class="t " style="left:958.50px;top:704.00px;font-size:14.56px;line-height:20px;letter-spacing:0.0238em;color:#0052CC;-webkit-text-stroke:0.06px #0052CC;">Peter Second</div>
<div class="t " style="left:1068.50px;top:705.00px;font-size:11.00px;line-height:20px;letter-spacing:-0.0017em;color:#737373;">Signed: Thursday, Jun 3,</div>
<div class="t " style="left:893.40px;top:742.00px;font-size:11.00px;line-height:20px;letter-spacing:-0.0002em;color:#737373;">2021, 04:12 PM GMT+5</div>
<div class="t " style="left:1013.00px;top:741.00px;font-size:14.00px;line-height:20px;letter-spacing:0.0000em;color:#333333;font-weight:bold;-webkit-text-stroke:0.30px #333333;">,</div>
<div class="t " style="left:1022.00px;top:742.00px;font-size:11.00px;line-height:20px;letter-spacing:0.0176em;color:#737373;">v.1</div>
<div class="t " style="left:1037.50px;top:741.00px;font-size:14.00px;line-height:20px;letter-spacing:0.0000em;color:#333333;font-weight:bold;-webkit-text-stroke:0.30px #333333;">,</div>
<div class="t " style="left:1047.70px;top:742.00px;font-size:11.00px;line-height:20px;letter-spacing:-0.0021em;color:#737373;">Meaning: Review</div>
<div class="t " style="left:1235.00px;top:698.00px;font-size:16.64px;line-height:20px;letter-spacing:0.0254em;color:#333333;-webkit-text-stroke:0.06px #333333;">Needs Review</div>
<div class="t " style="left:1235.00px;top:723.00px;font-size:13.00px;line-height:20px;letter-spacing:0.0462em;color:#6B778C;-webkit-text-stroke:0.06px #6B778C;">Document version 2</div>
<div class="t " style="left:709.60px;top:782.00px;font-size:16.64px;line-height:20px;letter-spacing:-0.0100em;color:#0052CC;-webkit-text-stroke:0.06px #0052CC;">QM-RT2023 SPACE</div>
<div class="t " style="left:709.60px;top:806.00px;font-size:16.64px;line-height:20px;letter-spacing:-0.0138em;color:#0052CC;-webkit-text-stroke:0.06px #0052CC;">VIEW</div>
<div class="t " style="left:1235.00px;top:782.00px;font-size:16.64px;line-height:20px;letter-spacing:0.0334em;color:#333333;-webkit-text-stroke:0.06px #333333;">Not Reviewed</div>
<div class="t " style="left:1235.00px;top:807.00px;font-size:13.00px;line-height:20px;letter-spacing:0.0462em;color:#6B778C;-webkit-text-stroke:0.06px #6B778C;">Document version 3</div>
</body></html>
